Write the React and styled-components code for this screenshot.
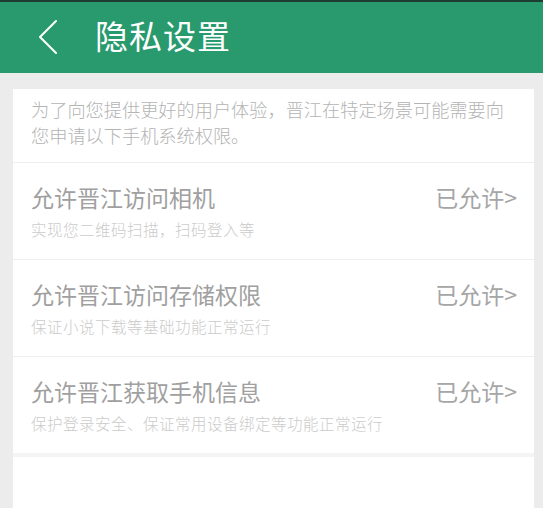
import React from 'react'
import styled, { createGlobalStyle } from 'styled-components'

const GlobalStyle = createGlobalStyle`
    html, body {
        margin: 0;
        padding: 0;
        background: #ececec;
    }
    body {
        font-family: "Noto Sans CJK SC", "Noto Sans", sans-serif;
    }
`

const Page = styled.div`
    width: 543px;
    height: 508px;
    overflow: hidden;
    background: #ececec;
    display: flex;
    flex-direction: column;
`

const Header = styled.header`
    height: 71px;
    flex-shrink: 0;
    border-top: 2px solid #1d3f33;
    background: #289a6e;
    display: flex;
    align-items: center;
    padding-left: 38px;
    box-sizing: content-box;
`

const BackButton = styled.button`
    width: 22px;
    height: 36px;
    padding: 0;
    border: none;
    background: none;
    display: flex;
    align-items: center;
    margin-top: -2px;
`

const Title = styled.h1`
    margin: -4px 0 0 35px;
    font-size: 33px;
    font-weight: 400;
    color: #ffffff;
    letter-spacing: 1px;
    line-height: 1;
`

const Card = styled.main`
    flex: 1;
    margin: 16px 9px 0 13px;
    background: #ffffff;
    display: flex;
    flex-direction: column;
`

const Intro = styled.p`
    margin: 0;
    padding: 7px 18px 0 18px;
    height: 66px;
    font-size: 18.2px;
    font-weight: 300;
    line-height: 26px;
    color: #b4b4b4;
    border-bottom: 1px solid #eeeeee;
`

const Row = styled.div`
    height: 96px;
    padding: 0 17px 0 18px;
    display: flex;
    justify-content: space-between;
    align-items: flex-start;
    border-bottom: ${p => (p.$last ? '4px solid #f4f4f4' : '1px solid #eeeeee')};
`

const RowText = styled.div`
    display: flex;
    flex-direction: column;
    padding-top: 19px;
`

const RowTitle = styled.div`
    font-size: 23px;
    font-weight: 400;
    line-height: 30px;
    color: #a0a0a0;
`

const RowDesc = styled.div`
    margin-top: 7px;
    font-size: 15.5px;
    font-weight: 300;
    line-height: 20px;
    letter-spacing: 0.5px;
    color: #cbcbcb;
`

const Status = styled.div`
    padding-top: 19px;
    font-size: 23px;
    font-weight: 400;
    line-height: 30px;
    color: #a6a6a6;
`

const ChevronLeft = () => (
    <svg width="20" height="36" viewBox="0 0 20 36">
        <path d="M18 2 L2 18 L18 34" fill="none" stroke="#ffffff" strokeWidth="2" strokeLinecap="round" strokeLinejoin="round" />
    </svg>
)

const permissions = [
    { title: '允许晋江访问相机', desc: '实现您二维码扫描，扫码登入等' },
    { title: '允许晋江访问存储权限', desc: '保证小说下载等基础功能正常运行' },
    { title: '允许晋江获取手机信息', desc: '保护登录安全、保证常用设备绑定等功能正常运行' },
]

export default function App() {
    return (
        <Page>
            <GlobalStyle />
            <Header>
                <BackButton aria-label="返回">
                    <ChevronLeft />
                </BackButton>
                <Title>隐私设置</Title>
            </Header>
            <Card>
                <Intro>为了向您提供更好的用户体验，晋江在特定场景可能需要向您申请以下手机系统权限。</Intro>
                {permissions.map((item, i) => (
                    <Row key={item.title} $last={i === permissions.length - 1}>
                        <RowText>
                            <RowTitle>{item.title}</RowTitle>
                            <RowDesc>{item.desc}</RowDesc>
                        </RowText>
                        <Status>已允许&gt;</Status>
                    </Row>
                ))}
            </Card>
        </Page>
    )
}
